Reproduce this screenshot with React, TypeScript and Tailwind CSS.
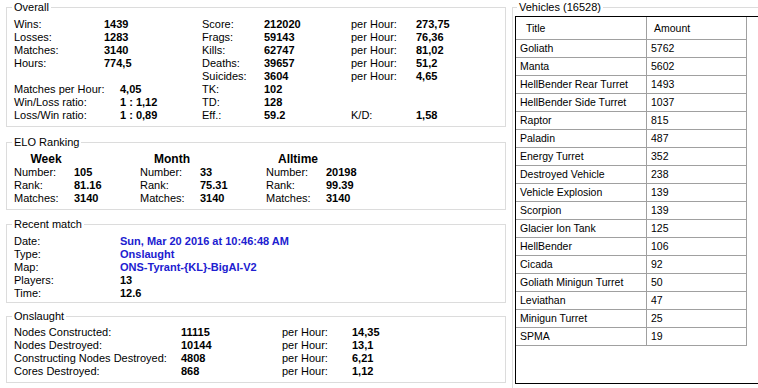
import React from "react";

type OverallRow = {
    l: string;
    v: string;
    wide?: boolean;
    r: string;
    rv: string;
    p?: string;
    pv?: string;
};

const overall: OverallRow[] = [
    { l: 'Wins:', v: '1439', r: 'Score:', rv: '212020', p: 'per Hour:', pv: '273,75' },
    { l: 'Losses:', v: '1283', r: 'Frags:', rv: '59143', p: 'per Hour:', pv: '76,36' },
    { l: 'Matches:', v: '3140', r: 'Kills:', rv: '62747', p: 'per Hour:', pv: '81,02' },
    { l: 'Hours:', v: '774,5', r: 'Deaths:', rv: '39657', p: 'per Hour:', pv: '51,2' },
    { l: '', v: '', r: 'Suicides:', rv: '3604', p: 'per Hour:', pv: '4,65' },
    { l: 'Matches per Hour:', v: '4,05', wide: true, r: 'TK:', rv: '102' },
    { l: 'Win/Loss ratio:', v: '1 : 1,12', wide: true, r: 'TD:', rv: '128' },
    { l: 'Loss/Win ratio:', v: '1 : 0,89', wide: true, r: 'Eff.:', rv: '59.2', p: 'K/D:', pv: '1,58' },
];

const elo = [
    { title: 'Week', number: '105', rank: '81.16', matches: '3140' },
    { title: 'Month', number: '33', rank: '75.31', matches: '3140' },
    { title: 'Alltime', number: '20198', rank: '99.39', matches: '3140' },
];

const recent = [
    { l: 'Date:', v: 'Sun, Mar 20 2016 at 10:46:48 AM', blue: true },
    { l: 'Type:', v: 'Onslaught', blue: true },
    { l: 'Map:', v: 'ONS-Tyrant-{KL}-BigAI-V2', blue: true },
    { l: 'Players:', v: '13' },
    { l: 'Time:', v: '12.6' },
];

const onslaught = [
    { l: 'Nodes Constructed:', v: '11115', pv: '14,35' },
    { l: 'Nodes Destroyed:', v: '10144', pv: '13,1' },
    { l: 'Constructing Nodes Destroyed:', v: '4808', pv: '6,21' },
    { l: 'Cores Destroyed:', v: '868', pv: '1,12' },
];

const vehicles = [
    ['Goliath', '5762'],
    ['Manta', '5602'],
    ['HellBender Rear Turret', '1493'],
    ['HellBender Side Turret', '1037'],
    ['Raptor', '815'],
    ['Paladin', '487'],
    ['Energy Turret', '352'],
    ['Destroyed Vehicle', '238'],
    ['Vehicle Explosion', '139'],
    ['Scorpion', '139'],
    ['Glacier Ion Tank', '125'],
    ['HellBender', '106'],
    ['Cicada', '92'],
    ['Goliath Minigun Turret', '50'],
    ['Leviathan', '47'],
    ['Minigun Turret', '25'],
    ['SPMA', '19'],
];

function GroupBox({ title, className, children }: { title: string; className: string; children: React.ReactNode }) {
    return (
        <fieldset className={`border border-[#dcdcdc] ${className}`}>
            <legend className="-ml-[2px] px-[2px] leading-[14px]">{title}</legend>
            {children}
        </fieldset>
    );
}

export default function App() {
    return (
        <div className="flex w-[758px] h-[388px] overflow-hidden bg-white text-black text-[11px] leading-[13px] font-['Liberation_Sans',Arial,sans-serif]">
            {/* left side: stats boxes */}
            <div className="flex flex-col w-[506px] shrink-0 pl-[6px]">
                <GroupBox title="Overall" className="w-[500px] px-[7px] pt-[4px] pb-[4px]">
                    {overall.map((row, i) => (
                        <div key={i} className="flex h-[13px]">
                            <div className="flex w-[188px]">
                                <span className={row.wide ? 'w-[106px]' : 'w-[90px]'}>{row.l}</span>
                                <span className="font-bold">{row.v}</span>
                            </div>
                            <span className="w-[62px]">{row.r}</span>
                            <span className="w-[87px] font-bold">{row.rv}</span>
                            <span className="w-[65px]">{row.p}</span>
                            <span className="font-bold">{row.pv}</span>
                        </div>
                    ))}
                </GroupBox>

                <GroupBox title="ELO Ranking" className="w-[500px] mt-[8px] px-[7px] pt-[4px] pb-[4px]">
                    <div className="flex">
                        {elo.map((e) => (
                            <div key={e.title} className="w-[126px]">
                                <div className="w-[64px] h-[13px] text-center text-[12px] font-bold">{e.title}</div>
                                <div className="flex h-[13px]">
                                    <span className="w-[60px]">Number:</span>
                                    <span className="font-bold">{e.number}</span>
                                </div>
                                <div className="flex h-[13px]">
                                    <span className="w-[60px]">Rank:</span>
                                    <span className="font-bold">{e.rank}</span>
                                </div>
                                <div className="flex h-[13px]">
                                    <span className="w-[60px]">Matches:</span>
                                    <span className="font-bold">{e.matches}</span>
                                </div>
                            </div>
                        ))}
                    </div>
                </GroupBox>

                <GroupBox title="Recent match" className="w-[500px] mt-[7px] px-[7px] pt-[4px] pb-[2px]">
                    {recent.map((r) => (
                        <div key={r.l} className="flex h-[13px]">
                            <span className="w-[106px]">{r.l}</span>
                            <span className={`font-bold ${r.blue ? 'text-[#2020d0]' : ''}`}>{r.v}</span>
                        </div>
                    ))}
                </GroupBox>

                <GroupBox title="Onslaught" className="w-[500px] mt-[6px] px-[7px] pt-[3px] pb-[4px]">
                    {onslaught.map((r) => (
                        <div key={r.l} className="flex h-[13px]">
                            <span className="w-[167px]">{r.l}</span>
                            <span className="w-[101px] font-bold">{r.v}</span>
                            <span className="w-[70px]">per Hour:</span>
                            <span className="font-bold">{r.pv}</span>
                        </div>
                    ))}
                </GroupBox>
            </div>

            {/* right side: vehicles list */}
            <div className="ml-[6px] shrink-0">
                <GroupBox title="Vehicles (16528)" className="w-[262px] h-[400px] pl-[2px] [&>legend]:ml-[2px]">
                    <div className="mt-[2px] w-[270px] h-[368px] border border-black text-[10.5px]">
                        <div className="w-[231px]">
                            <div className="flex h-[23px] border-b border-[#a0a0a0]">
                                <div className="w-[131px] border-r border-[#a0a0a0] pl-[10px] flex items-center">Title</div>
                                <div className="w-[100px] border-r border-[#a0a0a0] pl-[7px] flex items-center">Amount</div>
                            </div>
                            {vehicles.map(([name, amount]) => (
                                <div key={name} className="flex h-[18px] border-b border-[#a0a0a0]">
                                    <div className="w-[131px] border-r border-[#a0a0a0] pl-[4px] flex items-center">{name}</div>
                                    <div className="w-[100px] border-r border-[#a0a0a0] pl-[4px] flex items-center">{amount}</div>
                                </div>
                            ))}
                        </div>
                    </div>
                </GroupBox>
            </div>
        </div>
    );
}
